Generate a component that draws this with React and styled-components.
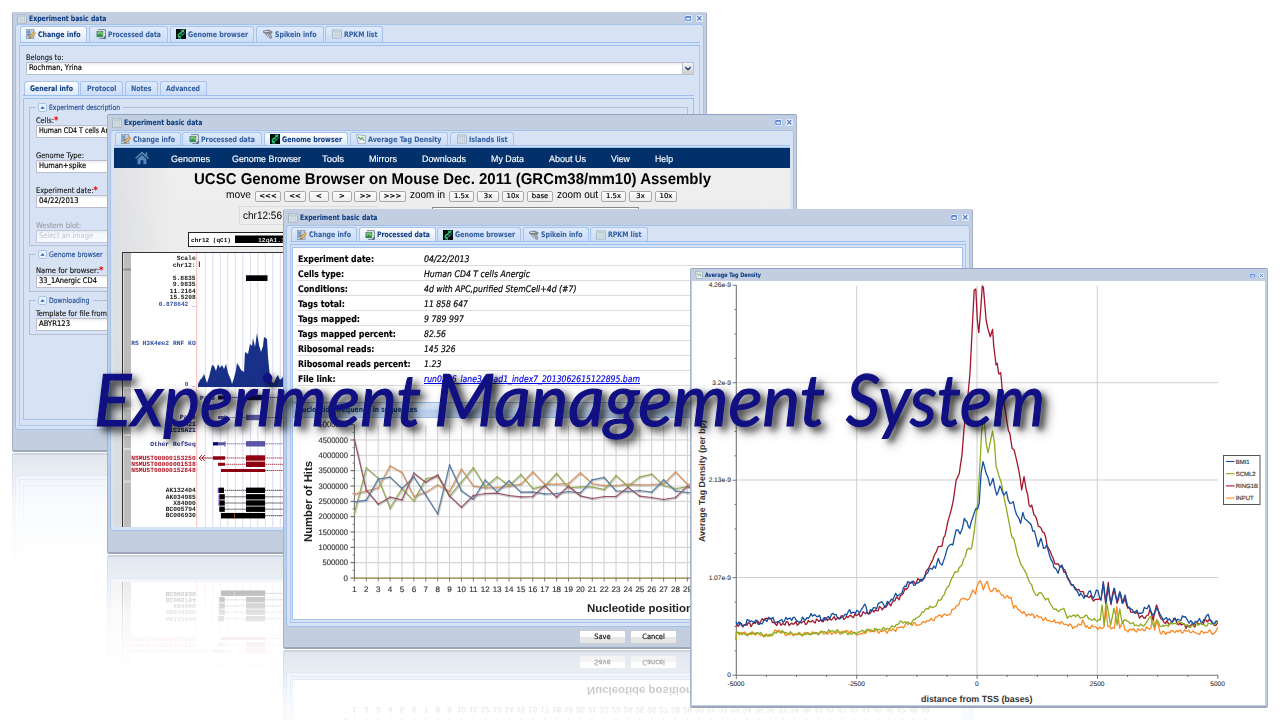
import React, { useLayoutEffect, useRef, useState } from "react";
import styled, { createGlobalStyle, css } from "styled-components";

const Global = createGlobalStyle`
  * { box-sizing: border-box; }
  body { margin: 0; background: #fff; overflow: hidden; }
  svg { flex: none; display: block; }
`;

const ui = `"DejaVu Sans Condensed", "DejaVu Sans", sans-serif`;
const arial = `"Liberation Sans", Arial, sans-serif`;

const Desktop = styled.main`
  position: relative;
  width: 1280px;
  height: 720px;
  overflow: hidden;
  background: #fff;
  font-family: ${ui};
  text-rendering: geometricPrecision;
`;

/* ---------- text condensed or widened to a known measure ---------- */
const FitBox = styled.span`
  display: inline-block;
  flex: none;
  width: ${(p) => p.$w}px;
  white-space: nowrap;
`;
const FitInner = styled.span`
  display: inline-block;
  transform-origin: 0 50%;
  white-space: pre;
`;
function Fit({ w, children }) {
  const ref = useRef(null);
  const [k, setK] = useState(1);
  useLayoutEffect(() => {
    const n = ref.current.offsetWidth;
    const exact = n ? ref.current.getBoundingClientRect().width : 0;
    if (exact) setK(w / exact);
  }, [w]);
  return (
    <FitBox $w={w}>
      <FitInner ref={ref} style={{ transform: `scaleX(${k})` }}>{children}</FitInner>
    </FitBox>
  );
}

/* ---------- windows ---------- */
const Win = styled.section`
  position: absolute;
  left: ${(p) => p.$x}px;
  top: ${(p) => p.$y}px;
  width: ${(p) => p.$w}px;
  height: ${(p) => p.$h}px;
  display: flex;
  flex-direction: column;
  background: #c3cfe0;
  border: 1px solid #a4b1c8;
  border-top-color: ${(p) => p.$top || "#8fa3c4"};
  border-bottom: 2px solid #9ca7b9;
  border-radius: 2px;
  ${(p) => p.$mirror && css`
    -webkit-box-reflect: below 1px linear-gradient(to bottom, transparent 74%, rgba(0,0,0,0.12) 87%, rgba(0,0,0,0.5) 100%);
  `}
`;
const TitleBar = styled.header`
  flex: none;
  height: ${(p) => p.$h}px;
  display: flex;
  align-items: center;
  padding: 0 2.5px 0 3.5px;
  gap: 2px;
  font-size: ${(p) => p.$fs || 7.6}px;
  font-weight: 700;
  color: #0d3d85;
  -webkit-text-stroke: 0.06px #0d3d85;
`;
const Grow = styled.div`
  flex: 1;
`;
const Tool = styled.span`
  width: ${(p) => p.$s || 9}px;
  height: ${(p) => p.$s || 9}px;
  border-radius: 2px;
  background: #e3edfb;
  border: 0.5px solid #b6cbec;
  display: flex;
  align-items: center;
  justify-content: center;
`;
const Body = styled.div`
  flex: 1;
  min-height: 0;
  margin: 0 2px;
  padding: 1px 3px 3px;
  display: flex;
  flex-direction: column;
  background: #d7e3f4;
  border: 1px solid #a2c2ee;
  border-radius: 3px;
`;
const Footer = styled.footer`
  flex: none;
  height: ${(p) => p.$h}px;
  display: flex;
  gap: 4px;
  align-items: flex-start;
  padding: 3px 0 0 ${(p) => p.$pl || 0}px;
`;
const FormButton = styled.button`
  width: 47px;
  height: 14px;
  padding: 0;
  border: 1px solid #ccd0d6;
  border-radius: 2px;
  background: linear-gradient(#fff 0 50%, #e6e6e6 50% 100%);
  font: 7.4px/12px ${ui};
  color: #222;
  -webkit-text-stroke: 0.2px #222;
`;

/* ---------- tabs ---------- */
const TabRow = styled.nav`
  flex: none;
  height: ${(p) => p.$h || 13}px;
  padding-left: 0.5px;
  display: flex;
  gap: 1.7px;
  align-items: stretch;
`;
const Tab = styled.div`
  width: ${(p) => p.$w}px;
  display: flex;
  align-items: center;
  justify-content: center;
  gap: 2px;
  border: 1px solid #a6c4ee;
  border-bottom: 0;
  border-radius: 3px 3px 0 0;
  font-size: 7.6px;
  line-height: 9px;
  font-weight: 700;
  color: ${(p) => (p.$on ? "#0f3c84" : "#3560a0")};
  -webkit-text-stroke: 0.06px currentColor;
  background: ${(p) => (p.$on ? "linear-gradient(#ffffff, #dbe8fa)" : "linear-gradient(#dfeafb, #cbdcf8)")};
`;
const Strip = styled.div`
  flex: none;
  height: ${(p) => p.$h || 4}px;
  border-top: 1px solid #9dbfec;
  border-bottom: 1px solid #9dbfec;
  background: #d3e3fb;
`;
const Panel = styled.div`
  flex: 1;
  min-height: 0;
  display: flex;
  flex-direction: column;
  ${(p) => p.$framed && css`
    border: 1px solid #a9c7ef;
    border-top: 0;
    padding: ${p.$pad || "0"};
  `}
`;

/* ---------- icons ---------- */
const Icon = ({ name, s = 10 }) => (
  <svg width={s} height={s} viewBox="0 0 16 16">
    {name === "grid" && (
      <g>
        <rect x="0.7" y="1.5" width="14.6" height="13" fill="#e4eef0" stroke="#8c9cab" />
        <rect x="1.2" y="2" width="13.6" height="2.6" fill="#c9d9de" />
        <path d="M1 5H15M1 8H15M1 11H15M5 2V14M8.500 2V14M12 2V14" stroke="#a9bcc6" strokeWidth="0.8" />
      </g>
    )}
    {name === "edit" && (
      <g>
        <rect x="0.7" y="1" width="12" height="14" fill="#c0d0e2" stroke="#6f87a5" />
        <path d="M2 3.500H7M2 6H7M2 8.500H8M2 11H6" stroke="#4b6f9a" strokeWidth="1.400" />
        <path d="M5.500 14.500L7 10.500L13 4L15.500 6.500L9.500 13Z" fill="#f0b657" stroke="#9b7226" strokeWidth="0.8" />
        <path d="M5.500 14.500L6.200 12.500L7.500 13.800Z" fill="#333" />
      </g>
    )}
    {name === "image" && (
      <g>
        <path d="M3 1H15V15H5" fill="#e4eaf1" stroke="#5d6f85" strokeWidth="1.300" />
        <rect x="1.500" y="4" width="9.500" height="8.500" fill="#2f9440" stroke="#3f6a57" />
        <path d="M2 4.500H10.500V8L7.500 6.500L4 9L2 8Z" fill="#7fb6a6" />
        <path d="M4 4.500L10.500 11V7L8 4.500Z" fill="#6fcf4c" />
        <path d="M12 14L15.500 10V15H11Z" fill="#3f5f8a" />
      </g>
    )}
    {name === "dna" && (
      <g>
        <rect width="16" height="16" fill="#04120c" />
        <path d="M13 0.500C13 5 4 6 3.500 10C3.500 13 8 13 7 15.500" stroke="#26cf58" strokeWidth="2.200" fill="none" />
        <path d="M8 0.500C8.500 3 14 3 13 7C12 11 4 11 4 15.500" stroke="#2aa7c2" strokeWidth="1.400" fill="none" />
        <path d="M8 3H12M5 8H11M4 12H7" stroke="#7df0a0" strokeWidth="1" />
      </g>
    )}
    {name === "gun" && (
      <g>
        <path d="M0.500 3L9 1.500L15 4.500L13.500 7L9 6.500L6 8L1 6Z" fill="#858b92" stroke="#5f666e" strokeWidth="0.8" />
        <path d="M7 6L12.500 8L14 14.500L11 15L9 10.500Z" fill="#a4a9af" stroke="#6a7077" strokeWidth="0.8" />
        <path d="M2 4H10" stroke="#e8eaec" strokeWidth="1.200" />
        <path d="M4 8L8 13" stroke="#777" strokeWidth="1.200" />
      </g>
    )}
    {name === "chart" && (
      <g>
        <path d="M1 1L15 2.500V15H3Z" fill="#f3f7f8" stroke="#7d909f" />
        <path d="M3 4.500L7 8L9.500 6L13 11" stroke="#3f9e45" strokeWidth="1.800" fill="none" />
        <path d="M3 12L8 10L12.500 4.500" stroke="#8fb1c8" strokeWidth="1" fill="none" />
      </g>
    )}
    {name === "max" && (
      <path d="M2 4H14V13H2Z M2 5.500H14" fill="none" stroke="#4570c6" strokeWidth="2.200" />
    )}
    {name === "x" && <path d="M3 3L13 13M13 3L3 13" stroke="#4a72c2" strokeWidth="2.800" fill="none" />}
    {name === "up" && <path d="M1 12L8 4L15 12Z" fill="#2c5aa8" />}
    {name === "down" && <path d="M0.500 3L8 9L15.500 3V8L8 15L0.500 8Z" fill="#24477e" />}
    {name === "home" && (
      <g fill="#5c87b5">
        <path d="M8 0.500L16 8L14.800 9.200L8 3L1.200 9.200L0 8Z" />
        <path d="M8 4.500L13 9V15H9.600V10.500H6.400V15H3V9Z" />
        <rect x="12" y="1.500" width="2" height="4" />
      </g>
    )}
  </svg>
);

function Title({ h, icon = "grid", text, w, fs, iconSize, toolSize }) {
  return (
    <TitleBar $h={h} $fs={fs}>
      <Icon name={icon} s={iconSize} />
      <Fit w={w}>{text}</Fit>
      <Grow />
      <Tool $s={toolSize}><Icon name="max" s={toolSize ? 5 : 6.5} /></Tool>
      <Tool $s={toolSize}><Icon name="x" s={toolSize ? 5 : 6.5} /></Tool>
    </TitleBar>
  );
}
function Tabs({ items, active, h, strip }) {
  return (
    <>
      <TabRow $h={h}>
        {items.map(([text, w, tw, icon]) => (
          <Tab key={text} $w={w} $on={text === active}>
            {icon && <Icon name={icon} />}
            <Fit w={tw}>{text}</Fit>
          </Tab>
        ))}
      </TabRow>
      <Strip $h={strip} />
    </>
  );
}

/* ---------- first window: form ---------- */
const Form = styled.div`
  display: flex;
  flex-direction: column;
  flex: 1;
  min-height: 0;
  padding: 7px 5px 0 6px;
`;
const Label = styled.label`
  display: block;
  height: 9px;
  font-size: 7.7px;
  line-height: 9px;
  color: ${(p) => (p.$off ? "#9aa0aa" : "#111")};
  -webkit-text-stroke: 0.12px currentColor;
  b { color: #f00; font-size: 9px; line-height: 6px; }
`;
const Input = styled.div`
  height: 13px;
  display: flex;
  align-items: stretch;
  padding-left: 2px;
  border: 1px solid #b9bfd0;
  background: linear-gradient(#ececec, #fff 3px);
  color: ${(p) => (p.$off ? "#b9bcc2" : "#000")};
  opacity: ${(p) => (p.$off ? 0.75 : 1)};
  font-size: 7.7px;
  line-height: 10.5px;
  -webkit-text-stroke: ${(p) => (p.$off ? 0 : 0.18)}px #000;
`;
const Trigger = styled.span`
  width: 11px;
  display: flex;
  align-items: center;
  justify-content: center;
  background: linear-gradient(#f4f4f4, #cfcfcf);
  border-left: 1px solid #b9bfd0;
`;
const InnerTabs = styled.div`
  display: flex;
  flex-direction: column;
  height: 339px;
  margin: 6.3px 0 0 -3px;
`;
const InnerPanel = styled.div`
  flex: 1;
  border: 1px solid #a3c3ef;
  border-top: 0;
  padding: 4px 5px 0;
`;
const Group = styled.fieldset`
  height: ${(p) => p.$h}px;
  margin: 0 0 4px;
  padding: ${(p) => p.$pt}px 0 0 6px;
  border: 1px solid #b5bfd3;
  min-width: 0;
`;
const Legend = styled.legend`
  display: flex;
  align-items: center;
  gap: 2px;
  height: 9px;
  padding: 0 3px 0 2px;
  font-size: 7.5px;
  line-height: 9px;
  color: #1c4790;
  -webkit-text-stroke: 0.12px currentColor;
`;
const Collapse = styled.span`
  width: 9px;
  height: 9px;
  border: 1px solid #a8c2e8;
  border-radius: 2px;
  background: #e9f1fd;
  display: flex;
  align-items: center;
  justify-content: center;
`;
const Field = styled.div`
  height: 35px;
`;

function FormGroup({ title, tw, h, pt, fields }) {
  return (
    <Group $h={h} $pt={pt}>
      <Legend><Collapse><Icon name="up" s={5} /></Collapse><Fit w={tw}>{title}</Fit></Legend>
      {fields.map(([label, lw, value, vw, star, off]) => (
        <Field key={label}>
          <Label $off={off}><Fit w={lw}>{label}</Fit>{star && <b>*</b>}</Label>
          <Input $off={off}><Fit w={vw}>{value}</Fit></Input>
        </Field>
      ))}
    </Group>
  );
}

function FormWindow() {
  return (
    <Win $x={12} $y={12} $w={695} $h={440} $top="#c3cfe0" $mirror>
      <Title h={11} text="Experiment basic data" w={77.5} />
      <Body>
        <Tabs
          h={15.5}
          active="Change info"
          items={[
            ["Change info", 67.5, 42.5, "edit"],
            ["Processed data", 79.5, 53, "image"],
            ["Genome browser", 84, 60, "dna"],
            ["Spikein info", 68, 41.5, "gun"],
            ["RPKM list", 58, 33.5, "grid"],
          ]}
        />
        <Panel $framed>
          <Form>
            <Label><Fit w={37.5}>Belongs to:</Fit></Label>
            <Input><Fit w={53}>Rochman, Yrina</Fit><Grow /><Trigger><Icon name="down" s={6} /></Trigger></Input>
            <InnerTabs>
              <Tabs
                active="General info"
                h={14}
                items={[["General info", 55, 43], ["Protocol", 43, 29.5], ["Notes", 33, 20.5], ["Advanced", 47, 34]]}
              />
              <InnerPanel>
                <FormGroup title="Experiment description" tw={71} h={143} pt={4} fields={[
                  ["Cells:", 18, "Human CD4 T cells Anergic", 86, true],
                  ["Genome Type:", 48, "Human+spike", 47],
                  ["Experiment date:", 57.5, "04/22/2013", 39.5, true],
                  ["Western blot:", 45, "Select an image", 54, false, true],
                ]} />
                <FormGroup title="Genome browser" tw={53.5} h={42} pt={7} fields={[["Name for browser:", 63, "33_1Anergic CD4", 58, true]]} />
                <FormGroup title="Downloading" tw={40.5} h={39} pt={4} fields={[["Template for file from", 71, "ABYR123", 31]]} />
              </InnerPanel>
            </InnerTabs>
          </Form>
        </Panel>
      </Body>
      <Footer $h={20} />
    </Win>
  );
}

/* ---------- second window: genome browser ---------- */
const GenomePage = styled.div`
  flex: 1;
  min-height: 0;
  display: flex;
  flex-direction: column;
  overflow: hidden;
  background: linear-gradient(90deg, rgba(200, 203, 212, 0.4), transparent 60px), linear-gradient(#efefef, #e6e6e6);
  font-family: ${arial};
`;
const MenuBar = styled.div`
  flex: none;
  height: 20px;
  display: flex;
  align-items: center;
  background: #02306a;
  color: #fff;
  font-size: 9.4px;
  padding-left: 21px;
  -webkit-text-stroke: 0.15px #fff;
`;
const MenuItem = styled.span`
  margin-left: ${(p) => p.$ml}px;
`;
const PageTitle = styled.h2`
  flex: none;
  margin: 3px 0 0 80px;
  font-size: 15.6px;
  line-height: 18px;
  height: 18px;
  font-weight: 700;
  color: #000;
`;
const NavRow = styled.div`
  flex: none;
  display: flex;
  align-items: center;
  height: 13px;
  padding-left: 112px;
  font-size: 10.8px;
  line-height: 13px;
  color: #000;
`;
const NavButton = styled.span`
  width: ${(p) => p.$w}px;
  height: 11px;
  margin-right: ${(p) => p.$mr ?? 3}px;
  display: inline-flex;
  align-items: center;
  justify-content: center;
  border: 1px solid #a9a9a9;
  border-radius: 2px;
  background: linear-gradient(#fff, #ececec);
  font: 6.9px/9px "DejaVu Sans", sans-serif;
  -webkit-text-stroke: 0.2px #000;
  margin-top: 2px;
`;
const PositionRow = styled.div`
  flex: none;
  display: flex;
  height: 26px;
  padding: 4px 0 0 125px;
  gap: 54px;
`;
const PositionBox = styled.div`
  width: 139px;
  height: 19px;
  padding: 2px 3px;
  border: 1px solid #dcdcdc;
  font-size: 10.8px;
  line-height: 14px;
`;
const PositionInput = styled.div`
  width: 207px;
  height: 17px;
  margin-top: 1px;
  border: 1px solid #888;
  background: #fff;
`;

const mono = `"Liberation Mono", "Courier New", monospace`;
const trackLabels = [
  [258, "Scale", 19], [264.5, "chr12:", 23], [278, "5.8835", 23], [284, "9.9835", 23], [290.5, "11.2164", 26], [296.5, "15.5208", 26],
  [303.5, "0.878642 _", 37, "#3350a8"], [343, "RS H3K4me2 RNF KO", 64.5, "#3350a8"], [384, "0 _", 11, "#3350a8"],
  [417, "Pax9", 16, "#14145f"], [423.5, "SIC25A21", 30, "#14145f"], [430, "SIC25A21", 30, "#14145f"], [443.5, "Other RefSeq", 45.5, "#24247c"],
  [457.500, "NSMUST00000153250", 64.500, "#b01020"], [464, "NSMUST00000001538", 64.500, "#b01020"], [470, "NSMUST00000152848", 64.500, "#b01020"],
  [490, "AK132404", 30], [496.500, "AK034985", 30], [502.700, "X84000", 22.500], [509, "BC005794", 30], [515.200, "BC006930", 30],
];
const signal = "198,387 198,384 200,380 202,378 204,374 206,380 207,383 209,377 210,373 212,365 214,366 216,371 218,364 220,368 222,365 224,369 226,364 228,373 231,380 232,384 234,378 236,370 237,363 239,366 241,370 244,372 245,352 248,354 250,344 252,346 253,338 255,347 257,333 259,345 261,352 263,346 264,337 267,339 268,357 270,377 272,382 274,383 276,378 278,375 280,380 283,377 284,387";
function Gene({ y, color, light, x1 = 218, w = 7, h = 4, one }) {
  return (
    <g fill={color}>
      <path d={`M${x1} ${y}H284`} stroke={color} strokeWidth="0.7" strokeDasharray="1.500 0.500" />
      {one ? <rect x={x1} y={y - h / 2} width={265 - x1} height={h} /> : (
        <>
          <rect x={x1} y={y - h / 2} width={w} height={h} fill={light || color} />
          <rect x="246" y={y - 2.700} width="19" height="5.400" fill={light || color} />
        </>
      )}
    </g>
  );
}
function Tracks() {
  return (
    <svg width="676" height="300" viewBox="114 228 676 300" fontFamily={mono} fontWeight="700" fontSize="6.400">
      <rect x="188.500" y="232.500" width="590" height="14" fill="#fff" stroke="#222" />
      <text x="191" y="241.500" textLength="40" lengthAdjust="spacingAndGlyphs" fontSize="6">chr12 (qC1)</text>
      <rect x="235" y="235.500" width="520" height="7.500" fill="#000" />
      <text x="258" y="241.500" textLength="27" lengthAdjust="spacingAndGlyphs" fontSize="6" fill="#ddd">12qA1.1</text>
      <rect x="122.500" y="252.500" width="660" height="290" fill="#fff" stroke="#333" />
      <rect x="123.500" y="253" width="7.500" height="290" fill="#bdbdbd" />
      {[269, 387.500, 408, 434.500, 448.500, 481].map((y) => (
        <path key={y} d={`M123.500 ${y}H131M123.500 ${y + 1}H131`} stroke={y === 269 ? "#777" : "#e9e9e9"} strokeWidth="0.700" />
      ))}
      {Array.from({ length: 11 }, (_, i) => (
        <path key={i} d={`M${205.300 + i * 7.500} 253V528`} stroke="#dcdaf6" />
      ))}
      <path d="M196.700 253V528" stroke="#ffb9b9" />
      <path d="M199.300 261.500V267" stroke="#222" />
      <rect x="246" y="275.300" width="21.500" height="5.700" />
      <polygon points={signal} fill="#183088" />
      {trackLabels.map(([y, t, w, c], i) => (
        <text key={i} x={195.700 - w} y={y + 2} textLength={w} lengthAdjust="spacingAndGlyphs" fill={c || "#222"}>{t}</text>
      ))}
      <text x="200" y="399.500" textLength="15" fill="#14145f">Pax9</text>
      <Gene y={397.500} color="#14145f" />
      <Gene y={417.500} color="#4a4690" light="#5d59a6" h={3} />
      <Gene y={443.800} color="#4a4690" light="#5a55a5" x1={213} w={12} h={3} />
      <rect x="213" y="442.300" width="5" height="3" fill="#0a0a66" />
      <path d="M225 441V447M225 415V420" stroke="#5a55a5" strokeWidth="0.800" />
      <path d="M199 458H214M202 455L199 458L202 461M205 455L202 458L205 461" stroke="#8c0010" strokeWidth="0.800" fill="none" />
      <Gene y={458} color="#8c0010" x1={213} w={12} h={3.500} />
      <Gene y={464.300} color="#8c0010" w={7} h={3} />
      <Gene y={470.500} color="#8c0010" x1={221} h={3} one />
      {[490.300, 496.800, 503, 509.200].map((y, i) => <Gene key={y} y={y} color="#000" x1={218.500 + (i ? 0.800 : 0)} w={5.500} h={5.300} />)}
      <path d="M218.200 488V493M219 494.500V506" stroke="#7a30c8" strokeWidth="0.900" />
      <Gene y={515.700} color="#000" x1={221} h={5.500} one />
      <path d="M234.500 513V518.500" stroke="#a05a10" strokeWidth="0.800" />
    </svg>
  );
}
function GenomeWindow() {
  const move = [["<<<", 26, 3], ["<<", 22, 3], ["<", 20, 3], [">", 20, 2], [">>", 23, 2], [">>>", 27, 4]];
  return (
    <Win $x={107} $y={114} $w={690} $h={440} $mirror>
      <Title h={15} text="Experiment basic data" w={78.500} />
      <Body>
        <Tabs
          h={13}
          strip={3}
          active="Genome browser"
          items={[
            ["Change info", 66, 42, "edit"],
            ["Processed data", 80, 54, "image"],
            ["Genome browser", 84.500, 60, "dna"],
            ["Average Tag Density", 98, 73.500, "chart"],
            ["Islands list", 64, 38.500, "grid"],
          ]}
        />
        <GenomePage>
          <MenuBar>
            <Icon name="home" s={14} />
            <MenuItem $ml={22}><Fit w={39}>Genomes</Fit></MenuItem>
            <MenuItem $ml={22}><Fit w={69}>Genome Browser</Fit></MenuItem>
            <MenuItem $ml={21}><Fit w={22}>Tools</Fit></MenuItem>
            <MenuItem $ml={25}><Fit w={28}>Mirrors</Fit></MenuItem>
            <MenuItem $ml={25}><Fit w={44}>Downloads</Fit></MenuItem>
            <MenuItem $ml={25}><Fit w={33}>My Data</Fit></MenuItem>
            <MenuItem $ml={25}><Fit w={37}>About Us</Fit></MenuItem>
            <MenuItem $ml={25}><Fit w={19}>View</Fit></MenuItem>
            <MenuItem $ml={25}><Fit w={18}>Help</Fit></MenuItem>
          </MenuBar>
          <PageTitle><Fit w={517}>UCSC Genome Browser on Mouse Dec. 2011 (GRCm38/mm10) Assembly</Fit></PageTitle>
          <NavRow>
            <Fit w={25}>move</Fit><MenuItem $ml={4} />
            {move.map(([t, w, mr]) => <NavButton key={t} $w={w} $mr={mr}>{t}</NavButton>)}
            <Fit w={35}>zoom in</Fit><MenuItem $ml={4} />
            <NavButton $w={25}>1.5x</NavButton><NavButton $w={22}>3x</NavButton><NavButton $w={22}>10x</NavButton><NavButton $w={26} $mr={4}>base</NavButton>
            <Fit w={41}>zoom out</Fit><MenuItem $ml={3} />
            <NavButton $w={25}>1.5x</NavButton><NavButton $w={23}>3x</NavButton><NavButton $w={22}>10x</NavButton>
          </NavRow>
          <PositionRow>
            <PositionBox><Fit w={39}>chr12:56</Fit></PositionBox>
            <PositionInput />
          </PositionRow>
          <Tracks />
        </GenomePage>
      </Body>
      <Footer $h={21} />
    </Win>
  );
}

/* ---------- third window: processed data ---------- */
const Results = styled.div`
  flex: 1;
  min-height: 0;
  display: flex;
  flex-direction: column;
  overflow: hidden;
  background: #fff;
  border: 1px solid #a3c3ef;
`;
const Facts = styled.dl`
  margin: 3px 0 0 4px;
  height: 151px;
`;
const Fact = styled.div`
  display: flex;
  height: 15.05px;
  border-bottom: 1px solid #dcdcdc;
  padding-top: 2px;
  font-size: 9.1px;
  line-height: 14px;
  color: #000;
`;
const Term = styled.dt`
  width: 127px;
  padding-left: 0.5px;
  font-weight: 700;
  -webkit-text-stroke: 0.12px currentColor;
`;
const Value = styled.dd`
  margin: 0;
  font-style: italic;
  -webkit-text-stroke: 0.18px currentColor;
`;
const ChartHead = styled.div`
  flex: none;
  height: 16px;
  padding-left: 4px;
  border-top: 1px solid #99bbe8;
  border-bottom: 1px solid #99bbe8;
  background: linear-gradient(#dce9f9, #cbdcf2 45%, #b8cfee 50%, #bdd3f0);
  font-size: 7.5px;
  line-height: 14px;
  font-weight: 700;
  color: #15428b;
`;

const facts = [
  ["Experiment date:", 76, "04/22/2013", 45.5],
  ["Cells type:", 46, "Human CD4 T cells Anergic", 106],
  ["Conditions:", 50, "4d with APC,purified StemCell+4d (#7)", 152.5],
  ["Tags total:", 47, "11 858 647", 44],
  ["Tags mapped:", 62, "9 789 997", 40],
  ["Tags mapped percent:", 98, "82.56", 22],
  ["Ribosomal reads:", 76.5, "145 326", 31.5],
  ["Ribosomal reads percent:", 112.5, "1.23", 17.5],
  ["File link:", 37.5, "run0206_lane3_read1_index7_2013062615122895.bam", 216],
];
const hits = [
  ["#d9935f", [284,275,265,199,219,291,278,256,275,209,259,265,264,260,254,217,254,254,252,220,252,258,258,254,256,255,253,217,254,257]],
  ["#97ad54", [340,205,236,326,267,304,238,230,290,247,205,262,232,258,225,267,260,222,265,262,262,270,228,260,232,224,258,267,262,250]],
  ["#5b7ea3", [307,302,239,233,267,232,287,343,197,274,299,242,277,244,278,277,283,282,276,280,241,234,274,276,273,278,241,274,279,279]],
  ["#9c5364", [120,272,314,293,301,221,248,226,289,323,288,282,281,288,292,291,258,293,260,289,297,291,291,263,290,294,300,294,260,280]],
];
const nx = (i) => 354.400 + i * 11.893;
function HitsChart() {
  return (
    <svg width="669" height="200" viewBox="293 418.500 669 200" fontFamily={arial} fontSize="8" fill="#333">
      {Array.from({ length: 49 }, (_, i) => (
        <g key={i}>
          {i > 0 && <path d={`M${nx(i)} 426V578`} stroke="#d3d3d3" strokeWidth="1.100" />}
          <path d={`M${nx(i)} 578V582`} stroke="#555" strokeWidth="0.800" />
          <text x={nx(i)} y="592.300" textAnchor="middle" stroke="#333" strokeWidth="0.150">{i + 1}</text>
        </g>
      ))}
      {Array.from({ length: 11 }, (_, i) => {
        const y = 578.500 - i * 15.330;
        return (
          <g key={i}>
            {i > 0 && i < 10 && <path d={`M354 ${y}H925`} stroke="#d6d6d6" strokeWidth="1.100" />}
            <path d={`M350.500 ${y}H354`} stroke="#444" strokeWidth="0.900" />
            {i < 10 && <path d={`M352.500 ${y - 7.660}H354`} stroke="#444" strokeWidth="0.700" />}
            <text x="348" y={y + 2.700} textAnchor="end" textLength={i === 0 ? undefined : i === 1 ? 25.500 : 29.500} lengthAdjust="spacingAndGlyphs" stroke="#333" strokeWidth="0.150">{i * 500000}</text>
          </g>
        );
      })}
      <path d="M354.400 425V578.500" stroke="#555" strokeWidth="0.900" />
      {hits.map(([c, v]) => (
        <g key={c}>
          <polyline points={v.map((z, i) => `${nx(i) + 0.700},${401 + z / 3}`).join(" ")} fill="none" stroke="#777" strokeOpacity="0.350" strokeWidth="1.800" />
          <polyline points={v.map((z, i) => `${nx(i)},${400 + z / 3}`).join(" ")} fill="none" stroke={c} strokeWidth="1.200" />
          {v.map((z, i) => <circle key={i} cx={nx(i)} cy={400 + z / 3} r="0.900" fill={c} />)}
        </g>
      ))}
      <path d="M354 578.700H925" stroke="#8b7a35" strokeWidth="1.300" />
      <text transform="translate(311.500 542.500) rotate(-90)" fontSize="11.400" fontWeight="700" textLength="81" lengthAdjust="spacingAndGlyphs" fill="#222">Number of Hits</text>
      <text x="587" y="612.500" fontSize="11.400" fontWeight="700" textLength="106" lengthAdjust="spacingAndGlyphs" fill="#222">Nucleotide position</text>
    </svg>
  );
}
const LinkText = styled.a`
  color: #0000ee;
  span span { text-decoration: underline; }
`;
function DataWindow() {
  return (
    <Win $x={283} $y={209} $w={690} $h={440} $top="#c3cfe0" $mirror>
      <Title h={15} text="Experiment basic data" w={77.500} />
      <Body>
        <Tabs
          h={14}
          active="Processed data"
          items={[
            ["Change info", 66.500, 42, "edit"],
            ["Processed data", 77, 53, "image"],
            ["Genome browser", 84, 60, "dna"],
            ["Spikein info", 65.500, 41.500, "gun"],
            ["RPKM list", 57.500, 33.500, "grid"],
          ]}
        />
        <Panel $framed $pad="2px 2px 2px 1px">
          <Results>
            <Facts>
              {facts.map(([t, tw, v, vw]) => {
                const value = <Fit w={vw}>{v}</Fit>;
                return (
                  <Fact key={t}>
                    <Term><Fit w={tw}>{t}</Fit></Term>
                    <Value>{v.endsWith(".bam") ? <LinkText>{value}</LinkText> : value}</Value>
                  </Fact>
                );
              })}
            </Facts>
            <ChartHead><Fit w={120.500}>Nucleotide frequency in sequences</Fit></ChartHead>
            <HitsChart />
          </Results>
        </Panel>
      </Body>
      <Footer $h={20} $pl={295}>
        <FormButton>Save</FormButton>
        <FormButton>Cancel</FormButton>
      </Footer>
    </Win>
  );
}

/* ---------- fourth window: density plot ---------- */
const PlotBody = styled.div`
  flex: 1;
  margin: 0 2px 1px 1px;
  background: #fff;
  overflow: hidden;
`;
const density = [
  { name: "INPUT", color: "#fb8a26", amp: 5, pts: [147,600,148,578,200,583,230,588,258,570,265,580,300,585,350,578,400,580,440,575,470,582,495,572,530,575,560,570,580,560,600,550,625,555,635,545,660,540,680,525,700,525,715,508,740,475,755,478,765,450,772,462,780,428,785,422,793,450,803,424,812,455,825,445,840,465,860,475,865,472,872,505,880,500,895,520,930,528,970,545,1000,548,1030,562,1045,555,1052,540,1060,562,1080,560,1100,565,1108,560,1112,495,1118,560,1135,565,1141,500,1149,565,1157,545,1163,570,1200,570,1230,565,1236,522,1240,570,1246,540,1255,580,1290,575,1340,573,1350,580,1380,575,1395,580,1405,562] },
  { name: "RING1B", color: "#a3162d", amp: 6, pts: [147,556,190,552,230,535,250,552,300,550,350,545,400,535,450,530,500,515,540,500,580,465,600,430,636,418,650,385,665,345,675,320,685,318,700,245,710,205,722,120,730,100,737,45,742,-30,750,-100,758,-200,764,-340,769,-450,773,-453,777,-360,781,-322,786,-390,790,-462,793,-458,800,-360,805,-333,811,-310,817,-332,820,-280,826,-225,829,-230,833,-198,838,-202,843,-140,855,-50,862,-20,868,25,873,30,880,62,886,95,893,150,899,110,905,150,912,195,919,195,925,225,940,260,955,290,963,325,975,355,985,372,1000,385,1015,420,1030,440,1050,455,1065,470,1085,478,1100,480,1106,430,1112,490,1119,427,1126,494,1134,445,1142,490,1149,457,1156,490,1163,475,1170,505,1190,520,1215,535,1228,508,1236,540,1245,495,1252,525,1265,548,1280,552,1290,540,1310,555,1330,558,1360,550,1385,540,1395,555,1405,548] },
  { name: "SCML2", color: "#8cad20", amp: 4, pts: [147,600,148,575,170,583,200,578,230,588,260,575,300,582,340,583,400,572,450,582,480,573,520,568,550,565,580,545,600,550,625,530,645,505,665,500,690,465,700,440,715,405,737,375,750,330,762,325,770,265,778,190,785,50,788,-20,791,-55,795,-62,800,10,805,38,812,0,817,-27,822,10,826,80,840,130,852,200,865,280,872,295,882,345,895,380,905,400,915,430,930,465,945,460,955,480,962,475,975,505,990,515,1003,505,1012,535,1030,525,1050,533,1060,525,1075,540,1098,540,1103,495,1108,555,1115,490,1125,555,1134,505,1142,555,1149,507,1156,550,1165,540,1180,550,1200,558,1215,553,1230,530,1238,560,1246,540,1258,560,1290,550,1310,548,1330,562,1350,550,1370,555,1405,548] },
  { name: "BMI1", color: "#15509f", amp: 6, pts: [147,545,165,557,180,540,215,552,232,532,255,545,300,532,310,545,350,525,380,540,400,520,420,535,440,515,470,518,483,492,490,520,510,503,527,485,535,500,560,470,580,460,595,425,615,435,636,418,655,385,668,385,675,355,685,375,700,322,713,315,722,270,732,282,738,265,743,235,757,265,770,215,782,190,787,100,792,65,800,100,810,137,818,115,828,165,836,138,847,165,853,155,862,190,871,185,880,225,890,250,896,217,905,240,918,255,930,290,936,320,943,295,950,325,958,315,970,360,988,400,998,375,1013,412,1020,430,1035,450,1055,475,1072,452,1080,475,1088,450,1100,480,1106,425,1113,488,1119,440,1126,490,1135,445,1142,485,1149,455,1156,490,1163,465,1170,500,1190,515,1205,520,1225,495,1235,525,1245,505,1258,530,1275,540,1305,540,1320,530,1330,550,1350,545,1368,540,1380,523,1392,550,1405,545] },
];
/* Fills long gaps between samples with a small deterministic ripple. */
function trace(pts, amp, seed) {
  const out = [];
  for (let i = 0; i < pts.length; i += 2) {
    const [x, y] = [pts[i], pts[i + 1]];
    if (i) {
      const [px, py] = [pts[i - 2], pts[i - 1]];
      const n = Math.floor((x - px) / 3.5);
      for (let j = 1; j < n; j++) {
        const t = j / n;
        const mx = px + (x - px) * t;
        out.push([mx, py + (y - py) * t + amp * (Math.sin(mx * 0.57 + seed) * 0.8 + Math.sin(mx * 0.31 + seed * 3) * 0.6)]);
      }
    }
    out.push([x, y]);
  }
  return out.map(([x, y]) => `${(736 + (x - 147) * 0.383).toFixed(1)},${(440 + y / 3).toFixed(1)}`).join(" ");
}
function DensityPlot() {
  const yl = ["0", "1.07e-9", "2.13e-9", "3.2e-9", "4.26e-9"];
  const legend = ["BMI1", "SCML2", "RING1B", "INPUT"];
  const color = Object.fromEntries(density.map((d) => [d.name, d.color]));
  return (
    <svg width="574" height="425" viewBox="692 281 574 425" fontFamily={arial} fontSize="6.600" fill="#333">
      {[856.700, 977, 1097.300].map((x) => <path key={x} d={`M${x} 286V675`} stroke="#cfcfcf" />)}
      {[382.700, 480, 577.500].map((y) => <path key={y} d={`M736 ${y}H1218`} stroke="#cfcfcf" />)}
      <path d="M736.300 285V675.200H1218" fill="none" stroke="#777" strokeWidth="1.100" />
      {Array.from({ length: 17 }, (_, i) => {
        const y = 675.200 - i * 24.370;
        return <path key={i} d={`M${i % 4 ? 734.500 : 732.500} ${y}H736`} stroke="#555" strokeWidth="0.800" />;
      })}
      {Array.from({ length: 17 }, (_, i) => {
        const x = 736.300 + i * 30.100;
        return <path key={i} d={`M${x} 675V${i % 4 ? 677 : 679}`} stroke="#555" strokeWidth="0.800" />;
      })}
      {yl.map((t, i) => <text key={t} x="731" y={677.200 - i * 97.450} textAnchor="end" stroke="#333" strokeWidth="0.100">{t}</text>)}
      {["-5000", "-2500", "0", "2500", "5000"].map((t, i) => (
        <text key={t} x={736 + i * 120.400} y="686" textAnchor="middle" stroke="#333" strokeWidth="0.100">{t}</text>
      ))}
      {density.map((d, i) => (
        <polyline key={d.name} points={trace(d.pts, d.amp, i + 1)} fill="none" stroke={d.color} strokeWidth="1.300" strokeLinejoin="round" />
      ))}
      <text x="921" y="702" fontSize="9" fontWeight="700" textLength="111.500" lengthAdjust="spacingAndGlyphs">distance from TSS (bases)</text>
      <text transform="translate(705 542) rotate(-90)" fontSize="8.800" fontWeight="700" textLength="122" lengthAdjust="spacingAndGlyphs">Average Tag Density (per bp)</text>
      <rect x="1223.500" y="455.500" width="36.500" height="49" fill="#fff" stroke="#555" />
      {legend.map((t, i) => (
        <g key={t}>
          <path d={`M1226 ${461.500 + i * 12.200}H1234.500`} stroke={color[t]} strokeWidth="1.100" />
          <text x="1235.700" y={463.700 + i * 12.200} fontSize="6" stroke="#333" strokeWidth="0.150">{t}</text>
        </g>
      ))}
    </svg>
  );
}
function DensityWindow() {
  return (
    <Win $x={690} $y={268} $w={578} $h={440}>
      <Title h={12} icon="chart" iconSize={8} text="Average Tag Density" w={56} fs={6} toolSize={7} />
      <PlotBody><DensityPlot /></PlotBody>
    </Win>
  );
}

/* ---------- overlay heading ---------- */
const Banner = styled.h1`
  position: absolute;
  left: 94px;
  top: 354px;
  margin: 0;
  display: flex;
  font: italic 400 72px/90px Lato, sans-serif;
  color: #101083;
  -webkit-text-stroke: 1.2px #101083;
  text-shadow: 5px 4px 6px rgba(0, 0, 0, 0.55), 6px 5px 11px rgba(0, 0, 0, 0.7);
`;
const Word = styled.span`
  margin-right: ${(p) => p.$gap || 0}px;
`;

export default function App() {
  return (
    <Desktop>
      <Global />
      <FormWindow />
      <GenomeWindow />
      <DataWindow />
      <DensityWindow />
      <Banner>
        <Word $gap={13}><Fit w={327}>Experiment</Fit></Word>
        <Word $gap={21}><Fit w={391}>Management</Fit></Word>
        <Word><Fit w={199}>System</Fit></Word>
      </Banner>
    </Desktop>
  );
}
